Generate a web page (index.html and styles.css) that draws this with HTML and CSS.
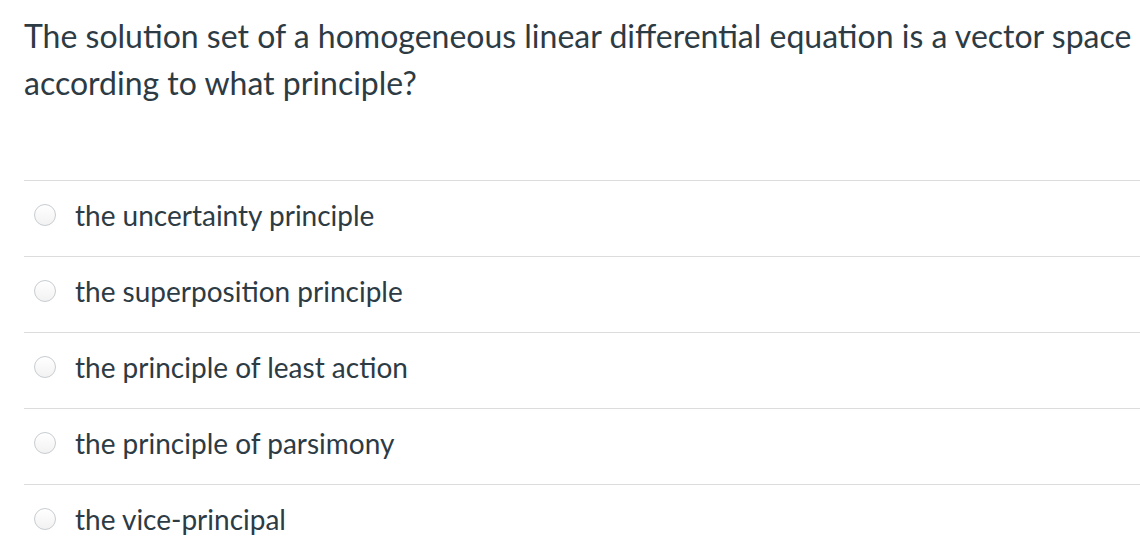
FILE: index.html
```html
<!DOCTYPE html>
<html>
<head>
<meta charset="utf-8">
<link rel="stylesheet" href="styles.css">
</head>
<body>
<div class="question">
  <p class="prompt">The solution set of a homogeneous linear differential equation is a vector space according to what principle?</p>
  <ul class="answers">
    <li class="answer"><span class="radio"></span><span class="label">the uncertainty principle</span></li>
    <li class="answer"><span class="radio"></span><span class="label">the superposition principle</span></li>
    <li class="answer"><span class="radio"></span><span class="label">the principle of least action</span></li>
    <li class="answer"><span class="radio"></span><span class="label">the principle of parsimony</span></li>
    <li class="answer"><span class="radio"></span><span class="label">the vice-principal</span></li>
  </ul>
</div>
</body>
</html>
```
FILE: styles.css
```css
html, body {
  margin: 0;
  padding: 0;
  background: #ffffff;
}
body {
  font-family: Lato, "Open Sans", sans-serif;
  color: #2d3b45;
  width: 1140px;
  height: 560px;
  overflow: hidden;
}
.question {
  padding-left: 24px;
}
.prompt {
  margin: 0;
  padding-top: 12px;
  font-size: 32px;
  line-height: 47px;
  height: 168px;
}
.answers {
  list-style: none;
  margin: 0;
  padding: 0;
}
.answer {
  display: flex;
  align-items: center;
  height: 75px;
  box-sizing: content-box;
  border-top: 1px solid #dcdcdc;
}
.answer-inner {
  display: flex;
}
.radio {
  width: 22px;
  height: 22px;
  box-sizing: border-box;
  border: 1px solid #c7cdd1;
  border-radius: 50%;
  background: linear-gradient(#ffffff, #f2f2f2);
  margin-left: 10px;
  margin-right: 19px;
  margin-bottom: 7px;
  flex: none;
}
.label {
  font-size: 28px;
  line-height: 32px;
  margin-bottom: 7px;
}
```
